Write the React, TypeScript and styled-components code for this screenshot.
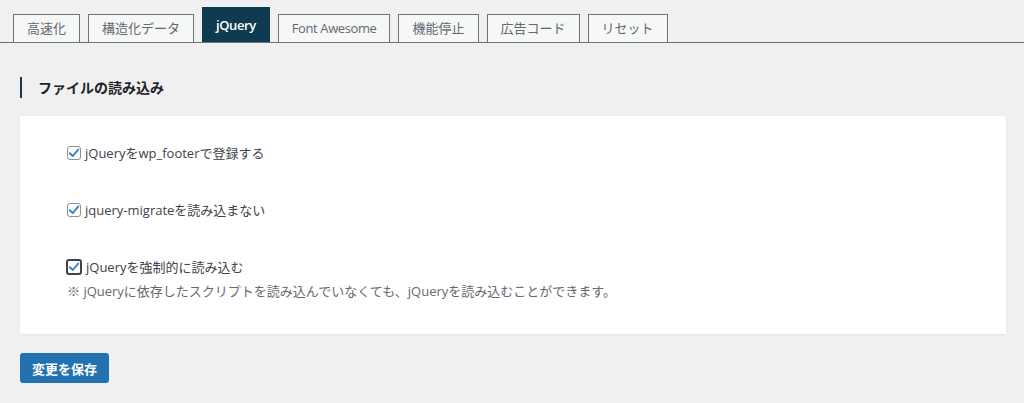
import React, { useState } from "react";
import styled, { createGlobalStyle } from "styled-components";

const FONT = `"Open Sans", "Noto Sans CJK JP", sans-serif`;

const GlobalStyle = createGlobalStyle`
  html, body {
    margin: 0;
    padding: 0;
    background: #f0f0f1;
    font-family: ${FONT};
    color: #3c434a;
  }
  * { box-sizing: border-box; }
`;

const TABS = ["高速化", "構造化データ", "jQuery", "Font Awesome", "機能停止", "広告コード", "リセット"];

const OPTIONS = [
  { id: "footer", label: "jQueryをwp_footerで登録する" },
  { id: "migrate", label: "jquery-migrateを読み込まない" },
  {
    id: "force",
    label: "jQueryを強制的に読み込む",
    note: "※ jQueryに依存したスクリプトを読み込んでいなくても、jQueryを読み込むことができます。",
  },
];

const isLatin = (s: string) => /^[\x20-\x7e]+$/.test(s);

const Page = styled.div`
  width: 1024px;
  height: 403px;
  overflow: hidden;
`;

const TabBar = styled.nav`
  display: flex;
  align-items: flex-end;
  gap: 8px;
  height: 43px;
  padding-left: 13px;
  border-bottom: 1px solid #6b7479;
`;

const Tab = styled.button<{ active: boolean; latin: boolean }>`
  font-family: ${FONT};
  font-size: 13px;
  letter-spacing: ${(p) => (p.latin ? "-0.4px" : "0")};
  line-height: 1;
  height: ${(p) => (p.active ? "35px" : "28px")};
  padding: 0 13px;
  border: 1px solid ${(p) => (p.active ? "#0e3b51" : "#6b7479")};
  border-bottom: none;
  background: ${(p) => (p.active ? "#0e3b51" : "#f6f7f7")};
  color: ${(p) => (p.active ? "#ffffff" : "#646970")};
  font-weight: ${(p) => (p.active ? 600 : 400)};
  cursor: pointer;
`;

const Content = styled.main`
  padding: 34px 18px 0 20px;
`;

const Heading = styled.h2`
  margin: 0;
  font-size: 14px;
  font-weight: 700;
  color: #1d2327;
  line-height: 21px;
  padding-left: 16px;
  border-left: 2px solid #23374a;
`;

const Panel = styled.section`
  margin-top: 18px;
  background: #ffffff;
  box-shadow: 0 1px 2px rgba(0, 0, 0, 0.06);
  padding: 27px 47px 33px;
  display: flex;
  flex-direction: column;
  gap: 37px;
`;

const Row = styled.div`
  display: flex;
  flex-direction: column;
  gap: 4px;
`;

const Label = styled.label`
  display: flex;
  align-items: center;
  gap: 4px;
  font-size: 13px;
  line-height: 20px;
  color: #3c434a;
  cursor: pointer;
`;

const Box = styled.span<{ focused: boolean }>`
  width: ${(p) => (p.focused ? "16px" : "14px")};
  height: ${(p) => (p.focused ? "16px" : "14px")};
  border: ${(p) => (p.focused ? "2px solid #3c434a" : "1px solid #8c8f94")};
  border-radius: 3px;
  background: #fff;
  display: inline-flex;
  align-items: center;
  justify-content: center;
  flex-shrink: 0;
  margin-left: ${(p) => (p.focused ? "-1px" : "0")};
`;

const Note = styled.p`
  margin: 0;
  font-size: 13px;
  line-height: 20px;
  color: #646970;
`;

const SaveButton = styled.button`
  margin-top: 19px;
  height: 30px;
  padding: 0 12px;
  border: none;
  border-radius: 3px;
  background: #2271b1;
  color: #ffffff;
  font-family: ${FONT};
  font-size: 13px;
  font-weight: 700;
  cursor: pointer;
`;

const Check = () => (
  <svg width="12" height="12" viewBox="0 0 12 12">
    <path d="M1.8 6.2 L4.8 9 L10.2 2.6" fill="none" stroke="#3582c4" strokeWidth="1.9" strokeLinecap="round" strokeLinejoin="round" />
  </svg>
);

export default function App() {
  const [active, setActive] = useState("jQuery");

  return (
    <Page>
      <GlobalStyle />
      <TabBar>
        {TABS.map((t) => (
          <Tab key={t} active={t === active} latin={isLatin(t)} onClick={() => setActive(t)}>
            {t}
          </Tab>
        ))}
      </TabBar>
      <Content>
        <Heading>ファイルの読み込み</Heading>
        <Panel>
          {OPTIONS.map((o) => (
            <Row key={o.id}>
              <Label>
                <Box focused={o.id === "force"}>
                  <Check />
                </Box>
                {o.label}
              </Label>
              {o.note && <Note>{o.note}</Note>}
            </Row>
          ))}
        </Panel>
        <SaveButton>変更を保存</SaveButton>
      </Content>
    </Page>
  );
}
